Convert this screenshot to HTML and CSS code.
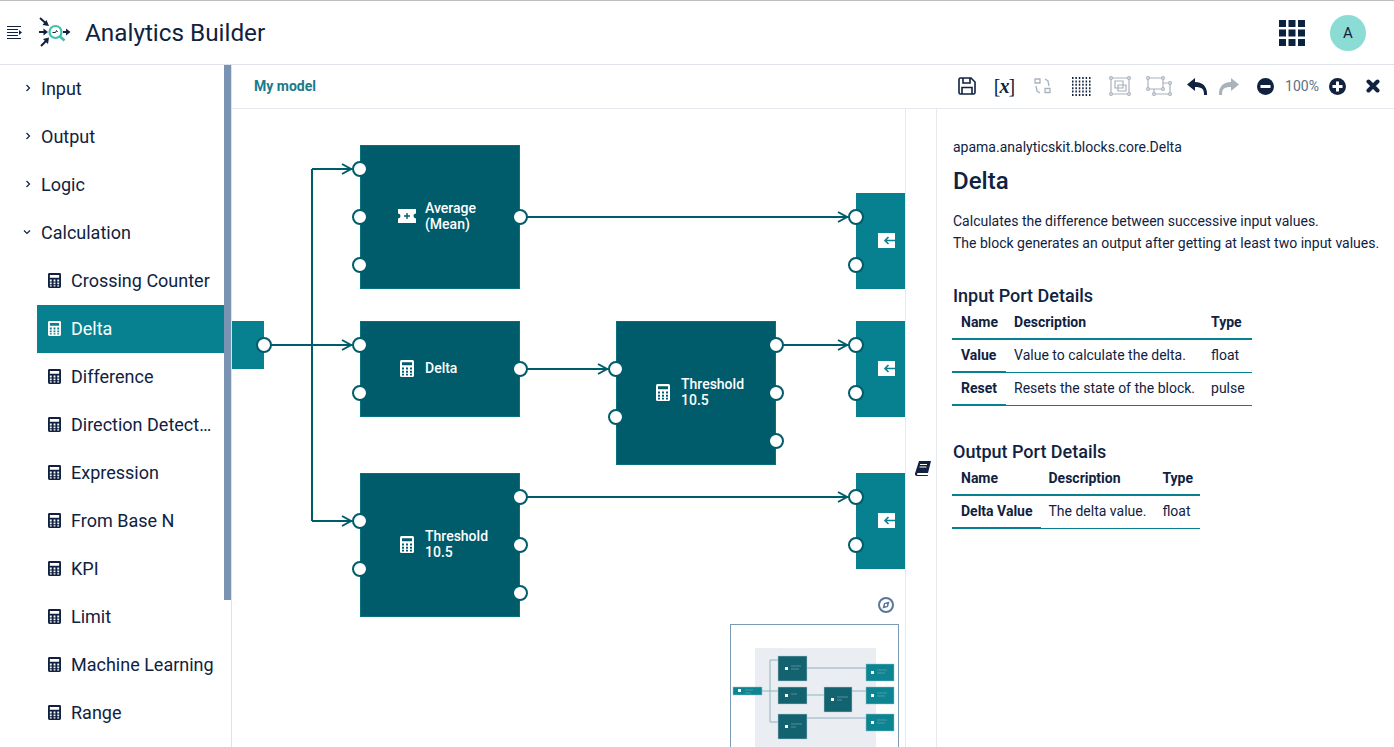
FILE: index.html
```html
<!DOCTYPE html>
<html lang="en">

<head>
    <meta charset="UTF-8">
    <meta name="viewport" content="width=device-width, initial-scale=1.0">
    <title>Analytics Builder</title>
    <link rel="stylesheet" href="styles.css">
</head>

<body>
    <svg class="sprites" width="0" height="0" aria-hidden="true">
        <symbol id="calc" viewBox="0 0 14 16" preserveAspectRatio="none">
            <path fill-rule="evenodd" d="M1.500 0h11A1.500 1.500 0 0 1 14 1.500v13a1.500 1.500 0 0 1-1.500 1.500h-11A1.500 1.500 0 0 1 0 14.500v-13A1.500 1.500 0 0 1 1.500 0zM2 2v3h10V2zM2 7v2h2V7zm4 0v2h2V7zm4 0v2h2V7zM2 10v2h2v-2zm4 0v2h2v-2zm4 0v2h2v-2zM2 13v1.500h2V13zm4 0v1.500h2V13zm4 0v1.500h2V13z" />
        </symbol>
        <symbol id="exit" viewBox="0 0 17 15">
            <path fill="#fff" d="M0 0h17v15H0z" />
            <path fill="none" stroke="#07818f" stroke-width="1.600" d="M17 7.500H7M10.500 4 7 7.500l3.500 3.500" />
        </symbol>
        <symbol id="chev-right" viewBox="0 0 6 8">
            <path fill="none" stroke="currentColor" stroke-width="1.200" d="M1.500 1l3 3-3 3" />
        </symbol>
        <symbol id="chev-down" viewBox="0 0 8 6">
            <path fill="none" stroke="currentColor" stroke-width="1.200" d="M1 1.500l3 3 3-3" />
        </symbol>
    </svg>

    <!-- Top bar -->
    <header class="topbar">
        <svg class="menu-icon" width="15" height="14" viewBox="0 0 15 14">
            <path fill="none" stroke="#10223f" d="M0 .5h14M0 3.500h11M0 6.500h11M0 9.500h11M0 12.500h14" />
            <path fill="#10223f" d="M12 4l3 2.500L12 9z" />
        </svg>
        <svg class="logo" width="32" height="32" viewBox="0 0 32 32">
            <path fill="none" stroke="#10223f" stroke-width="2" d="M1 1l5 4.500M0 15h5M2 29l5-5M24 15h3" />
            <path fill="#10223f" d="M10 9 3.500 8 7.500 3zM9 15l-4.500 3.500v-7zM10 20.500 9 27 4 22zM31.500 15l-4.500 3.500v-7z" />
            <circle cx="16.500" cy="15" r="6" fill="none" stroke="#3fbfae" stroke-width="2.200" />
            <path stroke="#3fbfae" stroke-width="2.600" d="M21 19.500l4.500 4" />
            <path fill="none" stroke="#10223f" d="M13.500 15.500h3l1-2 1 1.500" />
        </svg>
        <h1 class="app-title">Analytics Builder</h1>
        <svg class="apps" width="26" height="26" viewBox="0 0 26 26">
            <path fill="#0b2240" d="M0 0h7v7H0zM9.500 0h7v7h-7zM19 0h7v7h-7zM0 9.500h7v7H0zM9.500 9.500h7v7h-7zM19 9.500h7v7h-7zM0 19h7v7H0zM9.500 19h7v7h-7zM19 19h7v7h-7z" />
        </svg>
        <div class="avatar">A</div>
    </header>

    <div class="main">
        <!-- Block palette -->
        <aside class="sidebar">
            <ul class="tree">
                <li class="group"><svg class="chev"><use href="#chev-right" /></svg>Input</li>
                <li class="group"><svg class="chev"><use href="#chev-right" /></svg>Output</li>
                <li class="group"><svg class="chev"><use href="#chev-right" /></svg>Logic</li>
                <li class="group"><svg class="chev chev-open"><use href="#chev-down" /></svg>Calculation</li>
                <li class="leaf"><svg class="leaf-icon"><use href="#calc" /></svg><span class="leaf-name">Crossing Counter</span></li>
                <li class="leaf active"><svg class="leaf-icon"><use href="#calc" /></svg><span class="leaf-name">Delta</span></li>
                <li class="leaf"><svg class="leaf-icon"><use href="#calc" /></svg><span class="leaf-name">Difference</span></li>
                <li class="leaf"><svg class="leaf-icon"><use href="#calc" /></svg><span class="leaf-name">Direction Detect…</span></li>
                <li class="leaf"><svg class="leaf-icon"><use href="#calc" /></svg><span class="leaf-name">Expression</span></li>
                <li class="leaf"><svg class="leaf-icon"><use href="#calc" /></svg><span class="leaf-name">From Base N</span></li>
                <li class="leaf"><svg class="leaf-icon"><use href="#calc" /></svg><span class="leaf-name">KPI</span></li>
                <li class="leaf"><svg class="leaf-icon"><use href="#calc" /></svg><span class="leaf-name">Limit</span></li>
                <li class="leaf"><svg class="leaf-icon"><use href="#calc" /></svg><span class="leaf-name">Machine Learning</span></li>
                <li class="leaf"><svg class="leaf-icon"><use href="#calc" /></svg><span class="leaf-name">Range</span></li>
            </ul>
            <div class="scrollbar"></div>
        </aside>

        <section class="workspace">
            <!-- Toolbar -->
            <div class="toolbar">
                <span class="model-name">My model</span>
                <div class="tools">
                    <svg width="18" height="18" viewBox="0 0 18 18">
                        <path fill="none" stroke="#10223f" stroke-width="1.600" d="M1 2.500A1.500 1.500 0 0 1 2.500 1H13l4 4v10.500a1.500 1.500 0 0 1-1.500 1.500h-13A1.500 1.500 0 0 1 1 15.500zM5 1v5h7V1M4 17v-6.500h10V17" />
                    </svg>
                    <span class="var-icon">[<i>x</i>]</span>
                    <svg width="17" height="16" viewBox="0 0 17 16">
                        <g fill="none" stroke="#aab2bc" stroke-width="1.300">
                            <path d="M1 1h5v4H1zM11 10.500h5v4h-5zM2 8l1 5 3 2M15 8l-1-5-3-2" />
                        </g>
                    </svg>
                    <svg width="19" height="19" viewBox="0 0 19 19">
                        <path stroke="#10223f" stroke-width="2" stroke-dasharray="1.500 1.900" d="M0 1h19M0 4.400h19M0 7.800h19M0 11.200h19M0 14.600h19M0 18h19" />
                    </svg>
                    <svg width="22" height="20" viewBox="0 0 22 20">
                        <g fill="none" stroke="#aab2bc" stroke-width="1.200">
                            <path d="M2 2h18v16H2zM6 5h8v7H6zM9 9h8v6H9z" />
                            <circle cx="2" cy="2" r="1.400" fill="#fff" />
                            <circle cx="20" cy="2" r="1.400" fill="#fff" />
                            <circle cx="2" cy="18" r="1.400" fill="#fff" />
                            <circle cx="20" cy="18" r="1.400" fill="#fff" />
                        </g>
                    </svg>
                    <svg width="26" height="20" viewBox="0 0 26 20">
                        <g fill="none" stroke="#aab2bc" stroke-width="1.200">
                            <path d="M2 2h15v11H2zM8 13v5M17 7h7v11H8" />
                            <circle cx="2" cy="2" r="1.400" fill="#fff" />
                            <circle cx="17" cy="2" r="1.400" fill="#fff" />
                            <circle cx="2" cy="13" r="1.400" fill="#fff" />
                            <circle cx="17" cy="13" r="1.400" fill="#fff" />
                            <circle cx="24" cy="7" r="1.400" fill="#fff" />
                            <circle cx="24" cy="18" r="1.400" fill="#fff" />
                            <circle cx="8" cy="18" r="1.400" fill="#fff" />
                        </g>
                    </svg>
                    <svg width="20" height="17" viewBox="0 0 20 17">
                        <path fill="#10223f" d="M8 0 0 6.500 8 13V9c3 0 6 .5 7.500 2 1 1 1.500 3 1.500 6h3c.5-8-4-13-12-13z" />
                    </svg>
                    <svg width="20" height="17" viewBox="0 0 20 17">
                        <path fill="#aab2bc" d="M12 0l8 6.500-8 6.500V9c-3 0-6 .5-7.500 2C3.500 12 3 14 3 17H0C-.5 9 4 4 12 4z" />
                    </svg>
                    <svg width="17" height="17" viewBox="0 0 17 17">
                        <circle cx="8.500" cy="8.500" r="8.500" fill="#10223f" />
                        <path fill="#fff" d="M3.500 7h10v3h-10z" />
                    </svg>
                    <span class="zoom-level">100%</span>
                    <svg width="17" height="17" viewBox="0 0 17 17">
                        <circle cx="8.500" cy="8.500" r="8.500" fill="#10223f" />
                        <path fill="#fff" d="M3.500 7H7V3.500h3V7h3.500v3H10v3.500H7V10H3.500z" />
                    </svg>
                    <svg width="14" height="14" viewBox="0 0 14 14">
                        <path stroke="#10223f" stroke-width="4" stroke-linecap="round" d="M2.500 2.500l9 9M11.500 2.500l-9 9" />
                    </svg>
                </div>
            </div>

            <div class="work-body">
                <!-- Model canvas: nodes sit on a free canvas -->
                <div class="canvas">
                    <svg class="wires" width="673" height="638" viewBox="0 0 673 638">
                        <path d="M32 236H120M80 60V412M80 60H120M80 412H120M288 108H616M288 260H376M544 236H616M288 388H616" />
                        <path d="M110 55l9 5-9 5M110 231l9 5-9 5M110 407l9 5-9 5M606 103l9 5-9 5M366 255l9 5-9 5M606 231l9 5-9 5M606 383l9 5-9 5" />
                    </svg>

                    <div class="node source node-input"><span class="port port-r at-24"></span></div>

                    <div class="node block node-avg">
                        <span class="port port-l at-24"></span>
                        <span class="port port-l at-72"></span>
                        <span class="port port-l at-120"></span>
                        <span class="port port-r at-72"></span>
                        <svg class="avg-icon" width="18" height="14" viewBox="0 0 18 14">
                            <path fill="#fff" d="M0 0h18v4.500a2.500 2.500 0 0 0 0 5V14H0V9.500a2.500 2.500 0 0 0 0-5z" />
                            <path fill="#005c6b" d="M8.300 4h1.400v2.300H12v1.400H9.700V10H8.300V7.700H6V6.300h2.300z" />
                        </svg>
                        <span class="node-label">Average<br>(Mean)</span>
                    </div>

                    <div class="node block node-delta">
                        <span class="port port-l at-24"></span>
                        <span class="port port-l at-72"></span>
                        <span class="port port-r at-48"></span>
                        <svg class="node-icon"><use href="#calc" /></svg>
                        <span class="node-label">Delta</span>
                    </div>

                    <div class="node block node-mid">
                        <span class="port port-l at-48"></span>
                        <span class="port port-l at-96"></span>
                        <span class="port port-r at-24"></span>
                        <span class="port port-r at-72"></span>
                        <span class="port port-r at-120"></span>
                        <svg class="node-icon"><use href="#calc" /></svg>
                        <span class="node-label">Threshold<br>10.5</span>
                    </div>

                    <div class="node block node-low">
                        <span class="port port-l at-48"></span>
                        <span class="port port-l at-96"></span>
                        <span class="port port-r at-24"></span>
                        <span class="port port-r at-72"></span>
                        <span class="port port-r at-120"></span>
                        <svg class="node-icon"><use href="#calc" /></svg>
                        <span class="node-label">Threshold<br>10.5</span>
                    </div>

                    <div class="node sink node-out1">
                        <span class="port port-l at-24"></span>
                        <span class="port port-l at-72"></span>
                        <svg class="exit-icon"><use href="#exit" /></svg>
                    </div>
                    <div class="node sink node-out2">
                        <span class="port port-l at-24"></span>
                        <span class="port port-l at-72"></span>
                        <svg class="exit-icon"><use href="#exit" /></svg>
                    </div>
                    <div class="node sink node-out3">
                        <span class="port port-l at-24"></span>
                        <span class="port port-l at-72"></span>
                        <svg class="exit-icon"><use href="#exit" /></svg>
                    </div>

                    <svg class="compass" width="16" height="16" viewBox="0 0 16 16">
                        <circle cx="8" cy="8" r="7" fill="none" stroke="#58779a" stroke-width="2" />
                        <path fill="#58779a" d="M11.500 4.500 10 10 4.500 11.500 6 6zM8 6.800A1.200 1.200 0 1 0 8 9.200 1.200 1.200 0 0 0 8 6.800z" />
                    </svg>

                    <!-- Overview map -->
                    <div class="minimap">
                        <svg width="167" height="122" viewBox="0 0 167 122">
                            <rect class="mm-page" x="24" y="23" width="121" height="100" />
                            <path class="mm-wire" d="M31 66H47M39 35V97M39 35H47M39 97H47M76 43H135M76 70H93M121 66H135M76 93H135" />
                            <rect class="mm-sink" x="2" y="62" width="29" height="8" />
                            <rect class="mm-block" x="47" y="31" width="29" height="25" />
                            <rect class="mm-block" x="47" y="62" width="29" height="17" />
                            <rect class="mm-block" x="93" y="62" width="28" height="25" />
                            <rect class="mm-block" x="47" y="89" width="29" height="25" />
                            <rect class="mm-sink" x="135" y="39" width="28" height="17" />
                            <rect class="mm-sink" x="135" y="62" width="28" height="17" />
                            <rect class="mm-sink" x="135" y="89" width="28" height="17" />
                            <path class="mm-mark" d="M7 64h3v3H7zM54 42h3v3h-3zM54 69h3v3h-3zM100 73h3v3h-3zM54 100h3v3h-3zM140 46h3v3h-3zM140 69h3v3h-3zM140 96h3v3h-3z" />
                            <path class="mm-text" d="M14 65h8M14 68h6M60 41h10M60 44h8M60 69h6M106 72h11M106 75h5M60 99h11M60 102h5M146 45h10M146 48h8M146 68h10M146 71h8M146 95h10M146 98h8" />
                        </svg>
                    </div>
                </div>

                <div class="gutter">
                    <svg class="book" width="16" height="15" viewBox="0 0 16 15">
                        <path fill="#10223f" d="M4 0h12l-3 12H3a1 1 0 0 0 0 2h10l-.3 1H2a2 2 0 0 1-2-2.500z" />
                        <path stroke="#fff" d="M5 3.500h7M4.500 6h7" />
                    </svg>
                </div>

                <!-- Block documentation -->
                <div class="docs">
                    <p class="doc-path">apama.analyticskit.blocks.core.Delta</p>
                    <h2 class="doc-title">Delta</h2>
                    <p class="doc-text">Calculates the difference between successive input values.<br>The block generates an output after getting at least two input values.</p>

                    <h3 class="port-heading">Input Port Details</h3>
                    <table class="port-table">
                        <thead>
                            <tr>
                                <th>Name</th>
                                <th>Description</th>
                                <th>Type</th>
                            </tr>
                        </thead>
                        <tbody>
                            <tr>
                                <td class="port-name">Value</td>
                                <td>Value to calculate the delta.</td>
                                <td>float</td>
                            </tr>
                            <tr>
                                <td class="port-name">Reset</td>
                                <td>Resets the state of the block.</td>
                                <td>pulse</td>
                            </tr>
                        </tbody>
                    </table>

                    <h3 class="port-heading heading-output">Output Port Details</h3>
                    <table class="port-table">
                        <thead>
                            <tr>
                                <th>Name</th>
                                <th>Description</th>
                                <th>Type</th>
                            </tr>
                        </thead>
                        <tbody>
                            <tr>
                                <td class="port-name">Delta Value</td>
                                <td>The delta value.</td>
                                <td>float</td>
                            </tr>
                        </tbody>
                    </table>
                </div>
            </div>
        </section>
    </div>
</body>

</html>
```

FILE: styles.css
```css
/* Global styles */

html,
body {
    height: 100%;
}

body {
    margin: 0;
    overflow: hidden;
    font-family: Roboto, "Liberation Sans", sans-serif;
    color: #10223f;
    background-color: #fff;
}

.sprites {
    position: absolute;
}

/* Top bar */

.topbar {
    display: flex;
    align-items: center;
    box-sizing: border-box;
    height: 65px;
    border-top: 1px solid #bdbdbd;
    border-bottom: 1px solid #dfe3e9;
}

.menu-icon {
    margin-left: 7px;
}

.logo {
    margin-left: 17px;
}

.app-title {
    flex: 1;
    margin: 0 0 0 14px;
    font-size: 24.3px;
    font-weight: 400;
}

.apps {
    margin-right: 25px;
}

.avatar {
    width: 36px;
    height: 36px;
    margin-right: 28px;
    border-radius: 50%;
    background-color: #8bdcd4;
    font-size: 15px;
    line-height: 37px;
    text-align: center;
}

.main {
    display: flex;
    height: 682px;
}

/* Sidebar */

.sidebar {
    display: flex;
    flex: none;
    box-sizing: border-box;
    width: 232px;
    border-right: 1px solid #dfe3e9;
}

.tree {
    width: 224px;
    margin: 0;
    padding: 0;
    list-style: none;
    font-size: 18px;
}

.group,
.leaf {
    display: flex;
    align-items: center;
    box-sizing: border-box;
    height: 48px;
    padding-bottom: 2px;
}

.chev {
    flex: none;
    width: 6px;
    height: 8px;
    margin: 0 10px 0 25px;
}

.chev-open {
    width: 8px;
    height: 6px;
    margin: 0 10px 0 23px;
}

.leaf {
    margin-left: 37px;
    padding-left: 11px;
}

.leaf-icon {
    flex: none;
    width: 13px;
    height: 15px;
    margin-right: 10px;
    fill: #10223f;
}

.leaf-name {
    white-space: nowrap;
}

.active {
    background-color: #07818f;
    color: #fff;
}

.active .leaf-icon {
    fill: #fff;
}

.scrollbar {
    flex: none;
    width: 7px;
    height: 535px;
    background-color: #7b93b3;
}

/* Workspace */

.workspace {
    display: flex;
    flex: 1;
    flex-direction: column;
    min-width: 0;
}

.toolbar {
    display: flex;
    align-items: center;
    justify-content: space-between;
    box-sizing: border-box;
    height: 44px;
    padding: 0 6px 1px 22px;
    border-bottom: 1px solid #e6e9ee;
}

.model-name {
    font-size: 14px;
    font-weight: 700;
    color: #1a7a8c;
}

.tools {
    display: grid;
    grid-template-columns: 36px 38px 39px 39px 38px 39px 38px 26px 46px 28px 42px 30px;
    align-items: center;
    justify-items: center;
}

.var-icon {
    font-family: "Liberation Serif", serif;
    font-size: 20px;
    line-height: 20px;
    letter-spacing: -1px;
}

.var-icon i {
    font-weight: 700;
}

.zoom-level {
    font-size: 14px;
    color: #5f6f84;
}

.work-body {
    display: flex;
    flex: 1;
    min-height: 0;
}

/* Canvas */

.canvas {
    position: relative;
    flex: none;
    overflow: hidden;
    width: 673px;
}

.wires {
    position: absolute;
    top: 0;
    left: 0;
    fill: none;
    stroke: #005c6b;
    stroke-width: 2;
}

.node {
    position: absolute;
    display: flex;
    align-items: center;
    box-sizing: border-box;
    padding-bottom: 2px;
    border: 1px solid #06717f;
    font-size: 14px;
    font-weight: 500;
    line-height: 16px;
    color: #fff;
}

.block {
    background-color: #005c6b;
    padding-left: 39px;
}

.source,
.sink {
    background-color: #07818f;
    border-color: #07818f;
}

.node-input {
    top: 212px;
    left: 0;
    width: 32px;
    height: 48px;
}

.node-avg {
    top: 36px;
    left: 128px;
    width: 160px;
    height: 144px;
    padding-left: 37px;
}

.node-delta {
    top: 212px;
    left: 128px;
    width: 160px;
    height: 96px;
}

.node-mid {
    top: 212px;
    left: 384px;
    width: 160px;
    height: 144px;
}

.node-low {
    top: 364px;
    left: 128px;
    width: 160px;
    height: 144px;
}

.sink {
    left: 624px;
    width: 60px;
    height: 96px;
    padding-left: 21px;
}

.node-out1 {
    top: 84px;
}

.node-out2 {
    top: 212px;
}

.node-out3 {
    top: 364px;
}

.node-icon {
    flex: none;
    width: 14px;
    height: 17px;
    margin-right: 11px;
    fill: #fff;
}

.avg-icon {
    flex: none;
    margin-right: 9px;
}

.exit-icon {
    width: 17px;
    height: 15px;
}

/* Ports */

.port {
    position: absolute;
    box-sizing: border-box;
    width: 16px;
    height: 16px;
    margin-top: -8px;
    border: 2px solid #005c6b;
    border-radius: 50%;
    background-color: #fff;
}

.port-l {
    left: -9px;
}

.port-r {
    right: -9px;
}

.at-24 {
    top: 23px;
}

.at-48 {
    top: 47px;
}

.at-72 {
    top: 71px;
}

.at-96 {
    top: 95px;
}

.at-120 {
    top: 119px;
}

.compass {
    position: absolute;
    top: 488px;
    left: 646px;
}

/* Overview map */

.minimap {
    position: absolute;
    top: 515px;
    left: 498px;
    box-sizing: border-box;
    width: 169px;
    height: 140px;
    border: 1px solid #7b9ab5;
    background-color: #fff;
}

.minimap svg {
    display: block;
}

.mm-page {
    fill: #eaedf2;
}

.mm-wire {
    fill: none;
    stroke: #8fb3bf;
}

.mm-block {
    fill: #13626f;
    stroke: #b9cdd5;
    stroke-width: .5;
}

.mm-sink {
    fill: #0d8492;
    stroke: #8fc3cb;
    stroke-width: .5;
}

.mm-mark {
    fill: #fff;
}

.mm-text {
    fill: none;
    stroke: #6fa5b0;
    stroke-width: .7;
}

/* Gutter */

.gutter {
    display: flex;
    flex: none;
    align-items: flex-start;
    justify-content: center;
    box-sizing: border-box;
    width: 32px;
    padding: 352px 0 0 3px;
    border-left: 1px solid #e6e9ee;
    border-right: 1px solid #e6e9ee;
}

/* Docs panel */

.docs {
    flex: 1;
    min-width: 0;
    padding-left: 15px;
    font-size: 14px;
}

.doc-path {
    margin: 29px 0 0 1px;
    line-height: 18px;
}

.doc-title {
    margin: 11px 0 0 1px;
    font-size: 24px;
    font-weight: 500;
    line-height: 28px;
}

.doc-text {
    margin: 15px 0 0 1px;
    line-height: 22px;
}

.port-heading {
    margin: 31px 0 0 1px;
    font-size: 18px;
    font-weight: 500;
    line-height: 21px;
}

.heading-output {
    margin-top: 35px;
}

.port-table {
    border-collapse: collapse;
}

.port-table th,
.port-table td {
    height: 33px;
    box-sizing: border-box;
    padding: 0 8px;
    text-align: left;
    white-space: nowrap;
    border-bottom: 1px solid #07818f;
}

.port-table td {
    padding-bottom: 2px;
}

.port-table th {
    font-weight: 700;
    border-bottom-width: 2px;
}

.port-table .port-name {
    font-weight: 700;
    border-bottom-width: 2px;
}

.port-table th:first-child,
.port-table td:first-child {
    padding-left: 9px;
}

.port-table th:last-child,
.port-table td:last-child {
    padding-right: 7px;
}
```
